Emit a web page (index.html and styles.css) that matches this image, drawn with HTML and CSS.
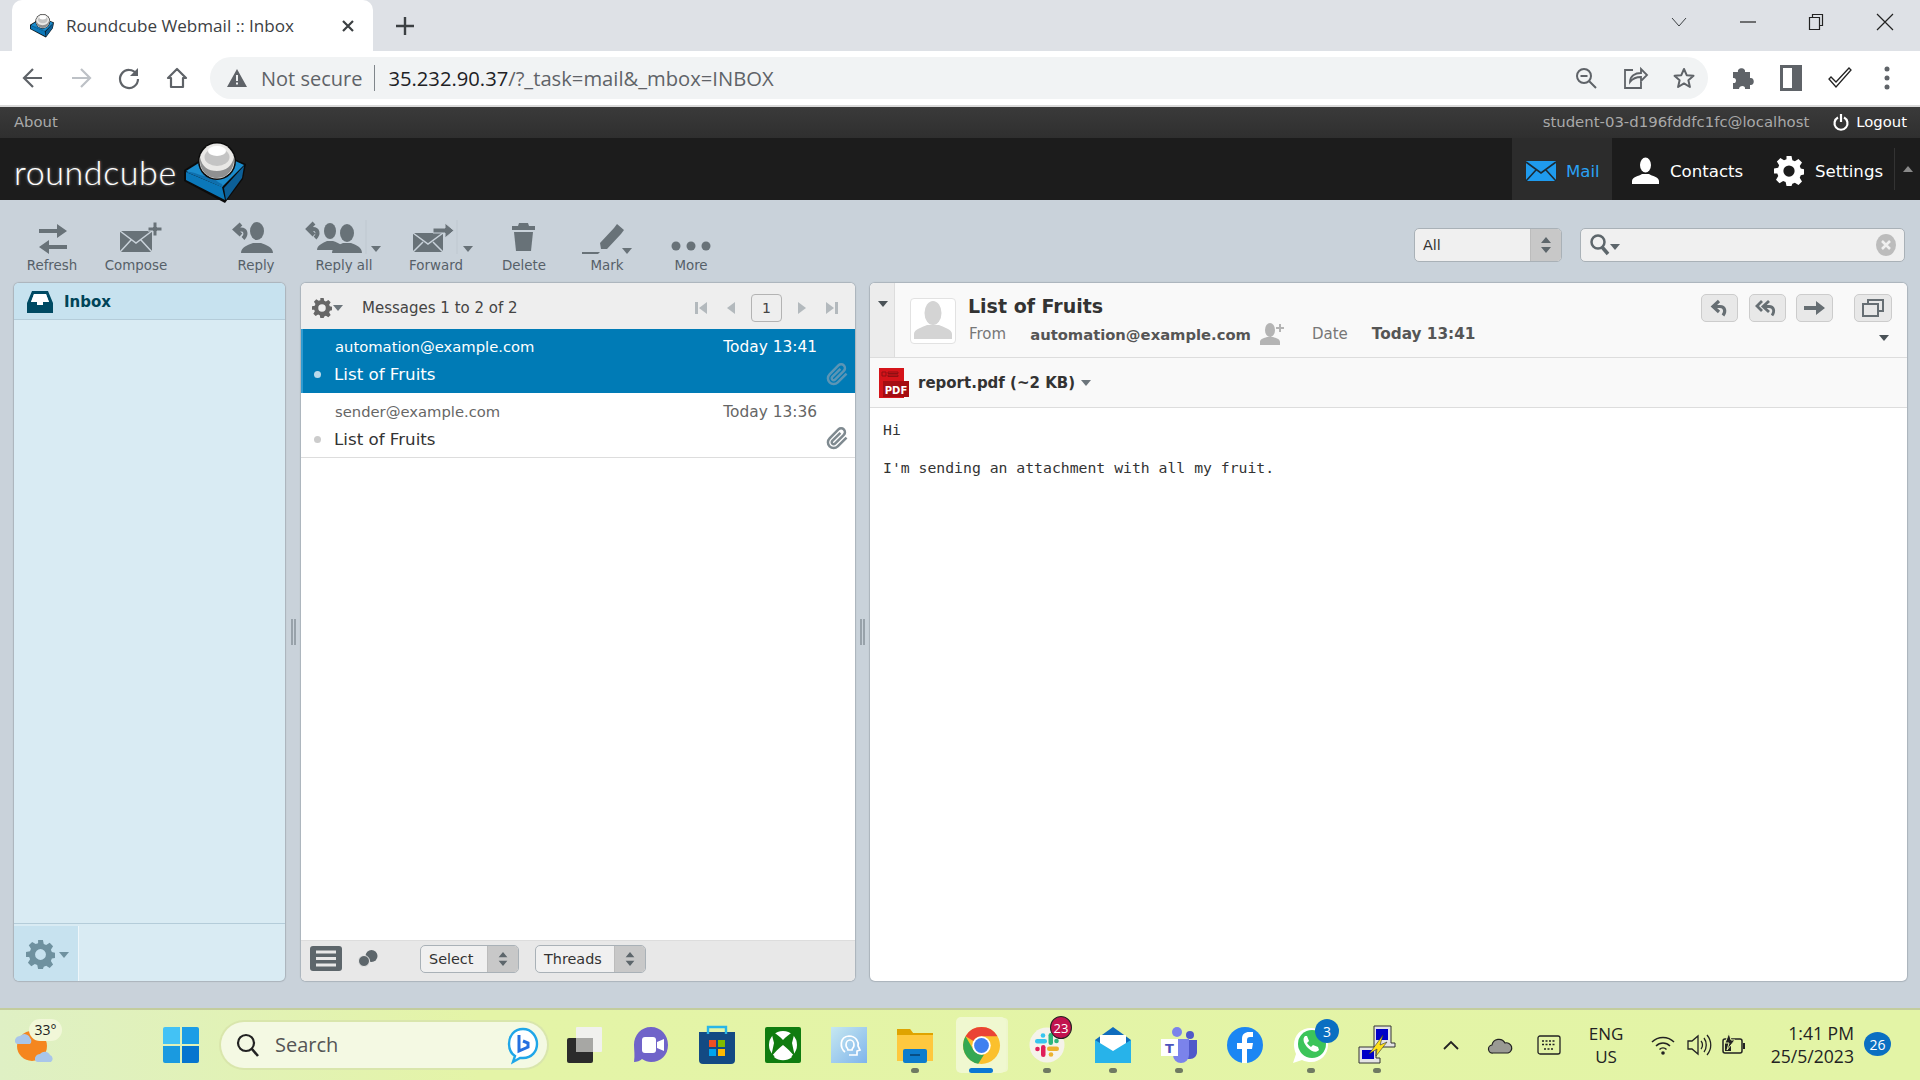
FILE: index.html
```html
<!DOCTYPE html>
<html lang="en">
<head>
<meta charset="utf-8">
<title>Roundcube Webmail :: Inbox</title>
<link rel="stylesheet" href="styles.css">
</head>
<body>
<svg class="defs" width="0" height="0">
  <defs>
    <symbol id="cube" viewBox="0 0 62 60" overflow="visible">
      <path d="M0 27 16 17 48 15 62 21 59 36 41 60 0 38z" fill="#0b0b0b"/>
      <path d="M2 29 38 44 41 57 2 37z" fill="#0b78ba"/>
      <path d="M2 28 18 18 47 16 60 22 38 44z" fill="#1b8ccd"/>
      <path d="M2 29c8-1 12 4 20 4s10 6 16 8l1 3z" fill="#0f6fad"/>
      <path d="M40 45 60 23 58 35 42 57z" fill="#0c5f97"/>
      <circle cx="33" cy="18" r="19" fill="#0b0b0b"/>
      <circle cx="33" cy="18" r="17.500" fill="#e9e8e6"/>
      <path d="M16 14c2 10 8 14 17 14s15-5 17-14c1 10-5 21-17 21s-18-10-17-21z" fill="#8f9091"/>
      <ellipse cx="33" cy="14" rx="12.500" ry="9" fill="#c4c4c4"/>
      <ellipse cx="33" cy="8" rx="9" ry="5" fill="#fff"/>
    </symbol>
    <symbol id="dbl" viewBox="0 0 16 20">
      <path d="M8 2 13 8H3zM8 18 3 12H13z" fill="#5d666b"/>
    </symbol>
    <symbol id="gear" viewBox="0 0 24 24">
      <path fill-rule="evenodd" d="M10 0h4l.7 3.3 2 .8L19.600 2.300l2.800 2.800-1.800 2.900.8 2 3.300.7v4l-3.300.7-.8 2 1.800 2.900-2.800 2.800-2.900-1.800-2 .8L14 24h-4l-.7-3.300-2-.8-2.900 1.800-2.800-2.800L3.400 16l-.8-2L0 14v-4l3.300-.7.800-2-1.800-2.900 2.800-2.800 2.900 1.800 2-.8zM12 7.500a4.500 4.500 0 1 0 0 9 4.500 4.500 0 0 0 0-9z"/>
    </symbol>
    <symbol id="clip" viewBox="0 0 24 24">
      <path d="M21.440 11.050l-9.190 9.190a6 6 0 0 1-8.490-8.490l9.190-9.190a4 4 0 0 1 5.660 5.660l-9.200 9.190a2 2 0 0 1-2.830-2.830l8.490-8.480" fill="none" stroke-width="2.600"/>
    </symbol>
  </defs>
</svg>

<div class="tabstrip">
  <div class="tab">
    <svg class="favicon" width="24" height="24" viewBox="0 0 62 60"><use href="#cube"/></svg>
    <span class="tab-title">Roundcube Webmail :: Inbox</span>
    <svg class="tab-x" width="14" height="14" viewBox="0 0 14 14"><path d="M2 2l10 10M12 2 2 12" stroke="#3c4043" stroke-width="2.200"/></svg>
  </div>
  <svg class="tab-new" width="20" height="20" viewBox="0 0 20 20"><path d="M10 1v18M1 10h18" stroke="#3c4043" stroke-width="2.400"/></svg>
  <div class="win-ctrls">
    <svg width="16" height="16" viewBox="0 0 16 16"><path d="M1 4l7 8 7-8" fill="none" stroke="#3c4043"/></svg>
    <svg width="16" height="16" viewBox="0 0 16 16"><path d="M0 8h16" stroke="#222" stroke-width="1.200"/></svg>
    <svg width="16" height="18" viewBox="0 0 16 18"><path d="M1.500 4.500h10v12h-10zM4.500 4V1.500h10v11H12" fill="none" stroke="#222" stroke-width="1.200"/></svg>
    <svg width="16" height="16" viewBox="0 0 16 16"><path d="M0 0l16 16M16 0 0 16" stroke="#222" stroke-width="1.200"/></svg>
  </div>
</div>

<div class="navbar">
  <div class="nav-btns">
    <svg width="22" height="22" viewBox="0 0 22 22"><path d="M20 11H3M11 2l-9 9 9 9" fill="none" stroke="#5f6368" stroke-width="2.200"/></svg>
    <svg width="22" height="22" viewBox="0 0 22 22"><path d="M2 11h17M11 2l9 9-9 9" fill="none" stroke="#bdc1c6" stroke-width="2.200"/></svg>
    <svg width="22" height="22" viewBox="0 0 22 22"><path d="M18.500 7A9 9 0 1 0 20 12" fill="none" stroke="#5f6368" stroke-width="2.200"/><path d="M20 1v8h-8z" fill="#5f6368"/></svg>
    <svg width="22" height="22" viewBox="0 0 22 22"><path d="M11 2 2 11h3v9h12v-9h3z" fill="none" stroke="#5f6368" stroke-width="2.200" stroke-linejoin="round"/></svg>
  </div>
  <div class="omnibox">
    <svg class="warn" width="20" height="18" viewBox="0 0 20 18"><path fill-rule="evenodd" d="M10 0 20 18H0zM9 6v6h2V6zM9 13.500v2h2v-2z" fill="#5f6368"/></svg>
    <span class="not-secure">Not secure</span>
    <span class="omni-sep"></span>
    <span class="url">35.232.90.37<span class="url-dim">/?_task=mail&amp;_mbox=INBOX</span></span>
    <span class="spring"></span>
    <svg width="22" height="22" viewBox="0 0 22 22"><circle cx="9" cy="9" r="7" fill="none" stroke="#5f6368" stroke-width="2"/><path d="M5.500 9h7M14 14l7 7" stroke="#5f6368" stroke-width="2"/></svg>
    <svg width="24" height="22" viewBox="0 0 24 22"><path d="M10 3H2v18h16v-6" fill="none" stroke="#5f6368" stroke-width="1.800"/><path d="M7 15c0-6 5-9 11-9V2l6 6-6 6v-4c-5 0-8 1-11 5z" fill="none" stroke="#5f6368" stroke-width="1.800"/></svg>
    <svg width="22" height="22" viewBox="0 0 22 22"><path d="M11 2l2.700 6.200 6.800.6-5.100 4.500 1.500 6.700L11 16.400 5.100 20l1.500-6.700L1.500 8.800l6.800-.6z" fill="none" stroke="#5f6368" stroke-width="2" stroke-linejoin="round"/></svg>
  </div>
  <div class="nav-ext">
    <svg width="22" height="24" viewBox="0 0 22 24"><path d="M1 6h5c-1-5 8-5 7 0h5v6c5-1 5 8 0 7v4h-5c1-4-6-4-6 0H1v-6c4 1 4-6 0-5z" fill="#5f6368"/></svg>
    <svg width="22" height="26" viewBox="0 0 22 26"><path fill-rule="evenodd" d="M0 0h22v26H0zM3 3v20h9V3z" fill="#5f6368"/></svg>
    <svg width="24" height="22" viewBox="0 0 24 22"><path d="M1 12l7 8L23 3l-2-2L8 15l-5-5z" fill="#fff" stroke="#222" stroke-width="1.300"/></svg>
    <svg width="6" height="24" viewBox="0 0 6 24"><circle cx="3" cy="3" r="2.500" fill="#5f6368"/><circle cx="3" cy="12" r="2.500" fill="#5f6368"/><circle cx="3" cy="21" r="2.500" fill="#5f6368"/></svg>
  </div>
</div>

<div class="topline">
  <span class="about">About</span>
  <span class="spring"></span>
  <span class="username">student-03-d196fddfc1fc@localhost</span>
  <svg class="power" width="16" height="18" viewBox="0 0 16 18"><path d="M5 4.500a6.500 6.500 0 1 0 6 0" fill="none" stroke="#fff" stroke-width="2.200"/><path d="M8 1v8" stroke="#fff" stroke-width="2.200"/></svg>
  <span class="logout">Logout</span>
</div>

<header class="appbar">
  <div class="logo">
    <span class="logo-text">roundcube</span>
    <svg class="logo-cube" width="62" height="60" viewBox="0 0 62 60"><use href="#cube"/></svg>
  </div>
  <span class="spring"></span>
  <nav class="tasks">
    <a class="task task-on">
      <svg width="30" height="20" viewBox="0 0 30 20"><path d="M0 0h30v20H0z" fill="#1f9bee"/><path d="M0 1l15 11L30 1M0 20l10-11M30 20 20 9" fill="none" stroke="#1c2a33" stroke-width="1.600"/></svg>
      <span>Mail</span>
    </a>
    <a class="task task-contacts">
      <svg width="27" height="26" viewBox="0 0 27 26"><ellipse cx="13.500" cy="7" rx="5.500" ry="7.500" fill="#fff"/><path d="M0 26v-3c0-4 7-5 10-7h7c3 2 10 3 10 7v3z" fill="#fff"/></svg>
      <span>Contacts</span>
    </a>
    <a class="task task-settings">
      <svg class="g-white" width="30" height="30"><use href="#gear"/></svg>
      <span>Settings</span>
    </a>
    <span class="minimize"><i class="tri-up"></i></span>
  </nav>
</header>

<main class="main">
  <div class="toolbar">
    <button class="tb b-refresh">
      <svg width="76" height="36" viewBox="0 0 76 36"><path d="M25 9h18V4l10 7-10 7v-5H25zM53 25H35v-5l-10 7 10 7v-5h18z"/></svg>
      <span>Refresh</span>
    </button>
    <button class="tb b-compose">
      <svg width="76" height="36" viewBox="0 0 76 36"><path d="M22 11h32v21H22z"/><path d="M22 11l16 12 16-12M22 32l11-12M54 32 43 20" fill="none" stroke="#c9d2da" stroke-width="1.500"/><path d="M50 7h5V2h4v5h5v4h-5v5h-4v-5h-5z" stroke="#c9d2da"/></svg>
      <span>Compose</span>
    </button>
    <button class="tb b-reply">
      <svg width="76" height="36" viewBox="0 0 76 36"><ellipse cx="39" cy="11" rx="7" ry="9"/><path d="M23 33c0-6 7-8 12-10h8c5 2 12 4 12 10z"/><path d="M23 4l-6 5.500 6 5.500M18 9.500h5c5 0 6 5 2 9" fill="none" stroke="#687278" stroke-width="4"/></svg>
      <span>Reply</span>
    </button>
    <button class="tb b-replyall">
      <svg width="76" height="36" viewBox="0 0 76 36"><ellipse cx="24" cy="11" rx="6" ry="8"/><path d="M11 30c0-5 6-7 10-9h6c3 1 6 2 8 4l-3 5z"/><ellipse cx="41" cy="13" rx="7" ry="9"/><path d="M26 33c0-6 7-8 11-10h8c5 2 11 4 11 10z"/><path d="M8 3 2 9l6 6M3 9h4c5 0 6 5 2 9" fill="none" stroke="#687278" stroke-width="4"/><path d="M60 0v34" stroke="#bfc8d0"/><path d="M65 26h10l-5 6z"/></svg>
      <span>Reply all</span>
    </button>
    <button class="tb b-forward">
      <svg width="76" height="36" viewBox="0 0 76 36"><path d="M15 13h30v19H15z"/><path d="M15 13l15 11 15-11M15 32l10-10M45 32 35 22" fill="none" stroke="#c9d2da" stroke-width="1.500"/><path d="M35 8h12V3l9 7.500-9 7.500v-5H35z" stroke="#c9d2da"/><path d="M59 0v34" stroke="#bfc8d0"/><path d="M65 26h10l-5 6z"/></svg>
      <span>Forward</span>
    </button>
    <button class="tb b-delete">
      <svg width="76" height="36" viewBox="0 0 76 36"><path d="M33 3h9l1 3h6v4H26V6h6z"/><path d="M28 12h19l-2 19H30z"/></svg>
      <span>Delete</span>
    </button>
    <button class="tb b-mark">
      <svg width="76" height="36" viewBox="0 0 76 36"><path d="M48 4l7 6-3 4-14 15h-6l-1-6 14-15z"/><path d="M13 32h18l-2 2H13z"/><path d="M53 28h10l-5 6z"/></svg>
      <span>Mark</span>
    </button>
    <button class="tb b-more">
      <svg width="76" height="36" viewBox="0 0 76 36"><circle cx="23" cy="26" r="4.500"/><circle cx="38" cy="26" r="4.500"/><circle cx="53" cy="26" r="4.500"/></svg>
      <span>More</span>
    </button>
    <span class="spring"></span>
    <div class="sel sel-filter">
      <span class="sel-label">All</span>
      <span class="sel-arrows"><svg width="16" height="20"><use href="#dbl"/></svg></span>
    </div>
    <div class="search">
      <svg width="32" height="24" viewBox="0 0 32 24"><circle cx="9" cy="9" r="6.500" fill="none" stroke="#5d666b" stroke-width="2.500"/><path d="M13 14l6 7" stroke="#5d666b" stroke-width="3.500"/><path d="M21 11h10l-5 6z" fill="#5d666b"/></svg>
      <span class="spring"></span>
      <svg width="20" height="24" viewBox="0 0 20 24"><ellipse cx="10" cy="12" rx="10" ry="11" fill="#bcbcbc"/><path d="M6 8l8 8M14 8l-8 8" stroke="#f0f0f0" stroke-width="2.500"/></svg>
    </div>
  </div>

  <div class="panels">
    <section class="panel p-folders">
      <div class="folder">
        <svg width="26" height="22" viewBox="0 0 26 22"><path fill-rule="evenodd" d="M5 0h16l5 12v10H0V12zM7 3 4 11h6v3h6v-3h6l-3-8z" fill="#004a63"/><path d="M7 3h12l3 8h-6v3h-6v-3H4z" fill="#fff"/></svg>
        <span>Inbox</span>
      </div>
      <div class="fill"></div>
      <div class="folder-foot">
        <span class="ff-gear">
          <svg class="g-blue" width="29" height="29"><use href="#gear"/></svg>
          <i class="tri tri-blue"></i>
        </span>
      </div>
    </section>

    <div class="splitter"><i></i></div>

    <section class="panel p-list">
      <div class="list-head">
        <svg class="g-grey" width="20" height="20"><use href="#gear"/></svg>
        <i class="tri tri-grey"></i>
        <span class="count">Messages 1 to 2 of 2</span>
        <span class="spring"></span>
        <svg width="14" height="14" viewBox="0 0 14 14" class="pg"><path d="M1 1h3v12H1zM13 1v12L5 7z"/></svg>
        <svg width="10" height="14" viewBox="0 0 10 14" class="pg pg-prev"><path d="M9 1v12L1 7z"/></svg>
        <span class="pagebox">1</span>
        <svg width="10" height="14" viewBox="0 0 10 14" class="pg pg-next"><path d="M1 1v12l8-6z"/></svg>
        <svg width="14" height="14" viewBox="0 0 14 14" class="pg pg-last"><path d="M1 1v12l8-6zM10 1h3v12h-3z"/></svg>
      </div>
      <div class="msg msg-on">
        <div class="msg-top"><span>automation@example.com</span><span class="msg-date">Today 13:41</span></div>
        <div class="msg-sub"><i class="dot"></i><span>List of Fruits</span></div>
        <svg class="clip" width="23" height="23"><use href="#clip"/></svg>
      </div>
      <div class="msg msg-2">
        <div class="msg-top"><span>sender@example.com</span><span class="msg-date">Today 13:36</span></div>
        <div class="msg-sub"><i class="dot"></i><span>List of Fruits</span></div>
        <svg class="clip" width="23" height="23"><use href="#clip"/></svg>
      </div>
      <div class="fill"></div>
      <div class="list-foot">
        <svg width="32" height="25" viewBox="0 0 32 25"><rect width="32" height="25" rx="3" fill="#5d666b"/><path d="M6 6h20M6 12.500h20M6 19h20" stroke="#e8e8e8" stroke-width="3"/></svg>
        <svg class="thr" width="20" height="18" viewBox="0 0 20 18"><circle cx="13.500" cy="6" r="6" fill="#5d666b"/><circle cx="6" cy="11" r="5.500" fill="#5d666b" stroke="#e8e8e8"/></svg>
        <div class="sel sel-select"><span class="sel-label">Select</span><span class="sel-arrows"><svg width="14" height="18"><use href="#dbl"/></svg></span></div>
        <div class="sel sel-threads"><span class="sel-label">Threads</span><span class="sel-arrows"><svg width="14" height="18"><use href="#dbl"/></svg></span></div>
      </div>
    </section>

    <div class="splitter sp2"><i></i></div>

    <section class="panel p-msg">
      <div class="msg-head">
        <div class="toggle"><i class="tri tri-dark"></i></div>
        <div class="avatar">
          <svg width="40" height="38" viewBox="0 0 40 38"><ellipse cx="20" cy="12" rx="8.500" ry="12" fill="#d4d4d4"/><path d="M1 38v-5c0-5 9-7 13-9h12c4 2 13 4 13 9v5z" fill="#d4d4d4"/></svg>
        </div>
        <div class="msg-info">
          <h1>List of Fruits</h1>
          <div class="meta">
            <span class="m-k m-from">From</span>
            <b class="m-v">automation@example.com</b>
            <svg class="addc" width="25" height="22" viewBox="0 0 25 22"><ellipse cx="10" cy="7" rx="5" ry="7" fill="#b4b4b4"/><path d="M0 22v-3c0-3 4-4 7-5h6c3 1 7 2 7 5v3z" fill="#b4b4b4"/><path d="M19 1h2v3h3v2h-3v3h-2V6h-3V4h3z" fill="#b4b4b4"/></svg>
            <span class="m-k m-date">Date</span>
            <b class="m-v m-when">Today 13:41</b>
          </div>
        </div>
        <div class="msg-tools">
          <div class="btns">
            <span class="ib"><svg width="20" height="18" viewBox="0 0 20 18"><path d="M9 2 3 7.500 9 13M4 7.500h6c5 0 6 5 3 9" fill="none" stroke="#666e73" stroke-width="3.200"/></svg></span>
            <span class="ib"><svg width="24" height="18" viewBox="0 0 24 18"><path d="M6 2 1 7l5 5M13 2 7 7.500 13 13M8 7.500h5c5 0 6 5 3 9" fill="none" stroke="#666e73" stroke-width="2.800"/></svg></span>
            <span class="ib"><svg width="22" height="16" viewBox="0 0 22 16"><path d="M0 6h12V1l9 7-9 7v-5H0z" fill="#666e73"/></svg></span>
            <span class="ib ib-open"><svg width="22" height="18" viewBox="0 0 22 18"><path d="M6 5V1h15v11h-5M1 5h15v12H1z" fill="none" stroke="#666e73" stroke-width="2"/></svg></span>
          </div>
          <i class="tri tri-dark tri-more"></i>
        </div>
      </div>
      <div class="attach">
        <svg width="32" height="32" viewBox="0 0 32 32"><path d="M1 1h25v30H1z" fill="#d5141a"/><path d="M4 5h4v4H4zM10 5h10v1.500H10zM10 8h10v1.500H10z" fill="none" stroke="#8f0f12"/><rect x="5" y="14" width="26" height="16" fill="#a50d12"/><text x="18" y="27" class="pdf-t" text-anchor="middle">PDF</text></svg>
        <span class="att-name">report.pdf (~2 KB)</span>
        <i class="tri tri-grey att-tri"></i>
      </div>
      <div class="body-text">
        <div>Hi</div>
        <div>&nbsp;</div>
        <div>I'm sending an attachment with all my fruit.</div>
      </div>
    </section>
  </div>
</main>

<footer class="taskbar">
  <div class="weather">
    <svg width="50" height="42" viewBox="0 0 50 42"><circle cx="19" cy="22" r="15" fill="#f5861f"/><path d="M2 18a5 5 0 0 1 5-6 6 6 0 0 1 10 2 4 4 0 0 1 0 6H5a3 3 0 0 1-3-2zM22 36a5 5 0 0 1 5-6 6 6 0 0 1 10 1 4 4 0 0 1 1 7H25a3 3 0 0 1-3-2z" fill="#a9c6ea"/></svg>
    <span class="temp">33°</span>
  </div>
  <div class="tk t-start">
    <svg width="36" height="36" viewBox="0 0 36 36"><path d="M0 2a2 2 0 0 1 2-2h15v17H0z" fill="#43c2f5"/><path d="M19 0h15a2 2 0 0 1 2 2v15H19z" fill="#1b9de6"/><path d="M0 19h17v17H2a2 2 0 0 1-2-2z" fill="#1a9ae0"/><path d="M19 19h17v15a2 2 0 0 1-2 2H19z" fill="#0675cf"/></svg>
  </div>
  <div class="tsearch">
    <svg width="24" height="24" viewBox="0 0 24 24"><circle cx="10" cy="10" r="8" fill="none" stroke="#222" stroke-width="2.200"/><path d="M15.500 15.500 22 23" stroke="#222" stroke-width="2.600"/></svg>
    <span>Search</span>
    <span class="spring"></span>
    <svg width="30" height="36" viewBox="0 0 30 36"><path d="M15 2C6 2 1 9 1 17c0 6 3 10 6 12l-2 6 7-4h3c9 0 14-7 14-14S24 2 15 2z" fill="#fff" stroke="#1fa6e8" stroke-width="2.400"/><path d="M11 8v16l9-4v-4l-5-2" fill="none" stroke="#2570e0" stroke-width="3"/></svg>
  </div>
  <div class="tk">
    <svg width="36" height="36" viewBox="0 0 36 36"><rect x="0" y="11" width="26" height="25" rx="2" fill="#2b2b2b"/><rect x="9" y="0" width="26" height="25" rx="1" fill="#f1f1ee"/><rect x="9" y="11" width="17" height="14" fill="#a7a7a4"/></svg>
  </div>
  <div class="tk">
    <svg width="36" height="38" viewBox="0 0 36 38"><path d="M18 1C8 1 1 9 1 19c0 5 1 10 0 17 3 0 6-1 8-3 3 2 6 3 9 3 10 0 17-7 17-17S28 1 18 1z" fill="#7063c9"/><rect x="9" y="11" width="14" height="16" rx="3" fill="#fff"/><path d="M24 16l7-3v12l-7-3z" fill="#fff"/></svg>
  </div>
  <div class="tk">
    <svg width="36" height="38" viewBox="0 0 36 38"><path d="M0 6h36v28a4 4 0 0 1-4 4H4a4 4 0 0 1-4-4z" fill="#134a83"/><path d="M9 8V1h18v7" fill="none" stroke="#29b6e8" stroke-width="2.400"/><path d="M10 14h7v7h-7z" fill="#ef4f23"/><path d="M19 14h7v7h-7z" fill="#7fba00"/><path d="M10 23h7v7h-7z" fill="#00a4ef"/><path d="M19 23h7v7h-7z" fill="#ffb900"/></svg>
  </div>
  <div class="tk">
    <svg width="36" height="36" viewBox="0 0 36 36"><rect width="36" height="36" rx="2" fill="#107c10"/><circle cx="18" cy="18" r="14" fill="#fff"/><path d="M6 4c5 2 9 6 12 9 3-3 7-7 12-9l-3 12 3 14c-4-5-8-9-12-12-4 3-8 7-12 12l3-14z" fill="#107c10"/><path d="M18 21c4 3 7 6 9 9a14 14 0 0 1-18 0c2-3 5-6 9-9z" fill="#fff"/></svg>
  </div>
  <div class="tk">
    <svg width="36" height="36" viewBox="0 0 36 36"><defs><linearGradient id="cg" x1="0" y1="0" x2="1" y2="1"><stop offset="0" stop-color="#c6e8f0"/><stop offset="1" stop-color="#7fb4ec"/></linearGradient></defs><rect width="36" height="36" fill="url(#cg)"/><path d="M14 25c-5-4-6-15 4-16 7 0 10 6 9 10l2 4-3 1v4h-8M15 18c0-3 2-5 4-5s4 2 4 5-2 3-2 5h-4c0-2-2-2-2-5z" fill="none" stroke="#fff" stroke-width="1.700"/></svg>
  </div>
  <div class="tk tk-on">
    <svg width="36" height="36" viewBox="0 0 36 36"><path d="M0 2h13l3 4h20v28H0z" fill="#fec83f"/><path d="M0 2h13l3 4h20v2H0z" fill="#dfa300"/><rect x="6" y="22" width="24" height="14" rx="2" fill="#0d7ccc"/><rect x="13" y="27" width="10" height="2" fill="#074e85"/></svg>
    <i class="run"></i>
  </div>
  <div class="tk tk-chrome">
    <span class="chrome-card">
      <svg width="37" height="37" viewBox="0 0 37 37"><circle cx="18.500" cy="18.500" r="18.500" fill="#fbc02d"/><path d="M18.500 0A18.500 18.500 0 0 1 34.500 9.250H18.500A9.250 9.250 0 0 0 10.500 13.900L2.500 9.250A18.500 18.500 0 0 1 18.500 0z" fill="#ea4335"/><path d="M2.500 9.250 10.500 23.100a9.250 9.250 0 0 0 10.600 4.300L15.300 36.700A18.500 18.500 0 0 1 2.500 9.250z" fill="#34a853"/><circle cx="18.500" cy="18.500" r="9.250" fill="#fff"/><circle cx="18.500" cy="18.500" r="7.400" fill="#3f80f0"/></svg>
    </span>
    <i class="run run-on"></i>
  </div>
  <div class="tk">
    <svg width="36" height="36" viewBox="0 0 36 36"><circle cx="18" cy="18" r="17.500" fill="#f5f3ea"/><rect x="6" y="12" width="12" height="4.500" rx="2.200" fill="#36c5f0"/><circle cx="14" cy="8.500" r="2.300" fill="#36c5f0"/><rect x="19.500" y="6" width="4.500" height="12" rx="2.200" fill="#2eb67d"/><circle cx="27.500" cy="14" r="2.300" fill="#2eb67d"/><rect x="18" y="19.500" width="12" height="4.500" rx="2.200" fill="#ecb22e"/><circle cx="22" cy="27.500" r="2.300" fill="#ecb22e"/><rect x="12" y="18" width="4.500" height="12" rx="2.200" fill="#e01e5a"/><circle cx="8.500" cy="22" r="2.300" fill="#e01e5a"/></svg>
    <b class="badge b-slack">23</b>
    <i class="run"></i>
  </div>
  <div class="tk">
    <svg width="36" height="36" viewBox="0 0 36 36"><path d="M18 0 36 13v23H0V13z" fill="#0f6cbd"/><path d="M5 8h26v12L18 26 5 20z" fill="#fff"/><path d="M0 13l18 11 18-11v23H0z" fill="#27b3ea"/></svg>
    <i class="run"></i>
  </div>
  <div class="tk">
    <svg width="36" height="36" viewBox="0 0 36 36"><circle cx="16" cy="5" r="5" fill="#7b83eb"/><circle cx="29" cy="8" r="4" fill="#5059c9"/><path d="M24 13h12v12c0 4-3 7-7 7h-5z" fill="#5059c9"/><path d="M10 12h18v16a8 8 0 0 1-16 0z" fill="#7b83eb"/><rect x="0" y="12" width="17" height="17" fill="#fff"/><text x="8.500" y="26" class="teams-t" text-anchor="middle">T</text></svg>
    <i class="run"></i>
  </div>
  <div class="tk">
    <svg width="36" height="36" viewBox="0 0 36 36"><circle cx="18" cy="18" r="18" fill="#1b86f3"/><path d="M15 36V22h-5v-6h5v-4c0-5 3-7 7-7h4v5h-3c-2 0-3 1-3 3v3h6l-1 6h-5v14z" fill="#fff"/></svg>
  </div>
  <div class="tk">
    <svg width="36" height="36" viewBox="0 0 36 36"><path d="M18 1C8 1 1 8 1 18c0 3 .8 6 2 9L0 36l9-3c3 1.500 6 2 9 2 10 0 17-8 17-17S28 1 18 1z" fill="#fff"/><circle cx="19" cy="17" r="14" fill="#3cc45a"/><path d="M12 9c-3 3-1 8 3 12s8 5 11 2l-1-3-5-2-2 2c-2-1-3-3-4-4l2-2-2-5z" fill="#fff"/></svg>
    <b class="badge b-wa">3</b>
    <i class="run"></i>
  </div>
  <div class="tk">
    <svg width="38" height="38" viewBox="0 0 38 38"><path d="M16 0h17v17h4v4H16z" fill="#e4e4e4" stroke="#333"/><path d="M18 3h12v11H18z" fill="#0000c8"/><path d="M1 21h17v11h4v5H1z" fill="#e4e4e4" stroke="#333"/><path d="M4 24h12v9H4z" fill="#0000c8"/><path d="M25 9 11 28l8-5-1 7 11-14-7 3z" fill="#ffe11a" stroke="#333" stroke-width=".6"/></svg>
    <i class="run"></i>
  </div>
  <div class="tray">
    <svg class="tr-caret" width="16" height="10" viewBox="0 0 16 10"><path d="M1 9l7-7 7 7" fill="none" stroke="#222" stroke-width="1.800"/></svg>
    <svg class="tr-cloud" width="24" height="18" viewBox="0 0 24 18"><path d="M5 17a4 4 0 0 1-1-8 7 7 0 0 1 13-2 5 5 0 0 1 3 10z" fill="#9a9a94" stroke="#222" stroke-width="1.200"/></svg>
    <svg class="tr-kb" width="24" height="20" viewBox="0 0 24 20"><rect x="1" y="1" width="22" height="18" rx="2" fill="none" stroke="#222" stroke-width="1.300"/><path d="M5 6h14M5 9.500h14M7 14h10" stroke="#222" stroke-width="1.500" stroke-dasharray="2 1.500"/></svg>
    <div class="lang"><span>ENG</span><span>US</span></div>
    <svg class="tr-wifi" width="24" height="20" viewBox="0 0 24 20"><path d="M1 7c6-6 16-6 22 0M5 11c4-4 10-4 14 0M8.500 14.500c2-2 5-2 7 0" fill="none" stroke="#222" stroke-width="1.500"/><circle cx="12" cy="18" r="1.800" fill="#222"/></svg>
    <svg class="tr-vol" width="24" height="22" viewBox="0 0 24 22"><path d="M1 7h4l6-5v18l-6-5H1z" fill="none" stroke="#222" stroke-width="1.300"/><path d="M14 7c2 2 2 6 0 8M17 4c3 4 3 10 0 14M20 1c5 6 5 14 0 20" fill="none" stroke="#222" stroke-width="1.300"/></svg>
    <svg class="tr-bat" width="24" height="24" viewBox="0 0 24 24"><rect x="1" y="6" width="19" height="14" rx="2" fill="none" stroke="#222" stroke-width="1.500"/><path d="M21 10h2v6h-2zM3 8h6v10H3z" fill="#222"/><path d="M7 0 3 10h4l-2 7 8-10H9z" fill="#222" stroke="#e4f4a6"/></svg>
    <div class="clock"><span>1:41 PM</span><span>25/5/2023</span></div>
    <span class="notif">26</span>
  </div>
</footer>
</body>
</html>
```

FILE: styles.css
```css
* { box-sizing: border-box; }
html, body { margin: 0; padding: 0; }
body {
  width: 1920px; height: 1080px; overflow: hidden;
  display: flex; flex-direction: column;
  font-family: "DejaVu Sans", sans-serif;
  background: #c9d2da;
}
svg { display: block; flex: none; overflow: visible; }
i { display: block; font-style: normal; }
.defs { position: absolute; }
.spring { flex: 1; }
.fill { flex: 1; }

/* browser chrome */
.tabstrip { height: 51px; background: #dee1e6; display: flex; align-items: center; padding-left: 12px; flex: none; }
.tab {
  width: 361px; height: 51px; background: #fff; margin-top: 0;
  border-radius: 10px 10px 0 0; display: flex; align-items: center; padding: 0 0 0 18px;
  font-family: "Open Sans", sans-serif; font-size: 17.100px; color: #3c4043;
}
.tab-title { margin-left: 12px; width: 275px; white-space: nowrap; }
.tab-new { margin-left: 22px; }
.win-ctrls { margin-left: auto; width: 222px; margin-right: 27px; display: flex; justify-content: space-between; align-items: center; margin-top: -7px; }

.navbar { height: 54px; background: #fff; display: flex; align-items: center; flex: none; padding-left: 22px; }
.nav-btns { display: flex; gap: 26px; width: 176px; align-items: center; }
.omnibox {
  width: 1498px; height: 42px; margin-left: 12px; background: #f1f3f4; border-radius: 21px;
  display: flex; align-items: center; padding: 0 13px 0 17px; gap: 26px;
  font-family: "Open Sans", sans-serif; font-size: 20px; color: #202124;
}
.warn { margin-right: -2px; }
.not-secure { color: #5f6368; margin-left: -10px; white-space: nowrap; }
.omni-sep { width: 1px; height: 26px; background: #80868b; margin: 0 -13px 0 -14px; }
.url { white-space: nowrap; font-size: 20.200px; }
.url-dim { color: #5f6368; }
.nav-ext { display: flex; align-items: center; gap: 26px; margin-left: 24px; }
.nav-ext svg:last-child { margin-left: 6px; }

/* roundcube header */
.topline {
  height: 33px; flex: none; background: linear-gradient(#dadada 0 2px, #3a3a3a 2px, #2f2f2f);
  display: flex; align-items: center; padding: 0 13px 0 14px;
  font-size: 14.800px; color: #a9a9a9;
}
.username { margin-right: 24px; font-size: 14.900px; }
.logout { color: #fff; margin-left: 7px; }
.about { color: #aaa; }

.appbar { height: 62px; flex: none; background: #1c1c1c; display: flex; align-items: stretch; position: relative; }
.logo { display: flex; align-items: flex-start; padding-left: 14px; }
.logo-text { font-family: Lato, sans-serif; font-size: 34px; font-weight: 300; color: #fff; text-shadow: 0 0 3px #999; letter-spacing: .6px; margin-top: 14px; line-height: 40px; }
.logo-cube { margin: 5px 0 0 7px; position: relative; }
.tasks { display: flex; align-items: stretch; font-size: 16.600px; color: #fff; }
.task { display: flex; align-items: center; padding: 4px 14px 0; gap: 10px; white-space: nowrap; }
.task-on { width: 100px; background: #2c2c2c; color: #2aa2f5; }
.task-contacts { padding: 4px 18px 0 20px; width: 148px; gap: 11px; }
.task-settings { padding: 4px 12px 0 14px; width: 134px; gap: 11px; }
.minimize { width: 26px; border-left: 1px solid #333; display: flex; align-items: center; justify-content: center; margin: 10px 0; }
.tri-up { width: 0; height: 0; border: 5px solid transparent; border-bottom: 6px solid #8a8a8a; border-top: 0; }
.g-white { fill: #fff; }

/* toolbar */
.main { flex: 1; display: flex; flex-direction: column; min-height: 0; }
.toolbar { height: 83px; flex: none; display: flex; align-items: flex-start; padding: 20px 15px 0 14px; }
.tb {
  width: 76px; padding: 0; border: 0; background: none; display: flex; flex-direction: column; align-items: center;
  font-family: inherit; font-size: 13.400px; color: #566068; fill: #687278;
}
.tb span { height: 18px; line-height: 18px; margin-top: 1px; white-space: nowrap; }
.b-compose { margin-left: 8px; }
.b-reply { margin-left: 44px; }
.b-replyall { margin-left: 12px; }
.b-forward { margin-left: 16px; }
.b-delete { margin-left: 12px; }
.b-mark { margin-left: 7px; }
.b-more { margin-left: 8px; }

.sel {
  height: 28px; background: #f0f0f0; border: 1px solid #a9b1b7; border-radius: 5px; display: flex; align-items: stretch; overflow: hidden;
  font-size: 14.400px; color: #333;
}
.sel-label { flex: 1; display: flex; align-items: center; padding-left: 8px; }
.sel-arrows { background: #c8c8c8; display: flex; align-items: center; justify-content: center; border-left: 1px solid #bcbcbc; }
.sel-filter { width: 148px; height: 34px; margin-top: 8px; }
.sel-filter .sel-arrows { width: 31px; }
.search {
  width: 325px; height: 34px; margin: 8px 0 0 18px; background: #f0f0f0; border: 1px solid #a9b1b7; border-radius: 5px;
  display: flex; align-items: center; padding: 0 8px 0 8px;
}

/* panels */
.panels { height: 698px; flex: none; display: flex; padding: 0 13px 0 14px; }
.panel { border-radius: 5px; overflow: hidden; display: flex; flex-direction: column; box-shadow: 0 0 1px 1px #aab3bb; }
.splitter { display: flex; align-items: center; justify-content: center; width: 16px; }
.splitter i { width: 5px; height: 26px; border-left: 2px solid #98a2aa; border-right: 2px solid #98a2aa; }
.sp2 { width: 15px; }

.p-folders { width: 271px; background: #d9ebf3; }
.folder { height: 37px; background: #c7e2ef; border-bottom: 1px solid #b4ccd9; display: flex; align-items: center; padding: 1px 0 0 13px; font-weight: bold; font-size: 15px; color: #004458; }
.folder span { margin-left: 11px; }
.folder-foot { height: 58px; border-top: 1px solid #b4ccd9; }
.ff-gear { width: 65px; height: 100%; margin-top: 2px; background: #c7e2ef; border-right: 1px solid #eef6fa; display: flex; align-items: center; padding-left: 12px; }
.g-blue { fill: #6f919f; }
.tri { width: 0; height: 0; border-left: 5px solid transparent; border-right: 5px solid transparent; border-top: 6px solid #6f919f; }
.tri-blue { margin-left: 4px; }
.tri-grey { border-top-color: #6c757b; }
.tri-dark { border-top-color: #4a5257; }

.p-list { width: 554px; background: #fff; }
.list-head { height: 46px; flex: none; background: #eee; display: flex; align-items: center; padding: 3px 16px 0 11px; font-size: 15px; color: #444; fill: #b3b9bd; }
.g-grey { fill: #666; }
.list-head .tri-grey { margin-left: 1px; }
.count { margin-left: 19px; white-space: nowrap; }
.pagebox { width: 31px; height: 28px; margin: 0 15px 0 15px; border: 1px solid #b3b3b3; border-radius: 4px; display: flex; align-items: center; justify-content: center; font-size: 14px; }
.pg-prev { margin-left: 18px; }
.pg-last { margin-left: 18px; }
.msg { height: 64px; flex: none; padding: 9px 38px 0 34px; border-bottom: 1px solid #ddd; position: relative; color: #666; font-size: 14.770px; stroke: #7f8a90; }
.msg-top { display: flex; justify-content: space-between; height: 17px; line-height: 17px; }
.msg-date { font-size: 15.400px; margin-top: 1px; }
.msg-sub { display: flex; align-items: center; margin: 10px 0 0 -21px; color: #333; font-size: 16.700px; height: 18px; }
.dot { width: 7px; height: 7px; border-radius: 50%; background: #ccc; margin-right: 13px; }
.clip { position: absolute; right: 6px; bottom: 7px; }
.msg-on { height: 65px; background: #007bb6; color: #fff; border-bottom: 1px solid #fff; box-shadow: inset 2px 0 0 #2f9bd1; stroke: #5b95b5; }
.msg-on .msg-sub { color: #fff; }
.msg-on .dot { background: #b9d9ea; }
.list-foot { height: 41px; flex: none; background: #e8e8e8; border-top: 1px solid #ddd; display: flex; align-items: center; padding: 0 0 5px 9px; font-size: 14px; }
.thr { margin-left: 16px; }
.sel-select { width: 99px; margin-left: 42px; }
.sel-select .sel-arrows { width: 31px; }
.sel-threads { width: 111px; margin-left: 16px; }
.sel-threads .sel-arrows { width: 31px; }

.p-msg { width: 1037px; background: #fff; }
.msg-head { height: 75px; flex: none; background: #f9f9f9; border-bottom: 1px solid #ddd; display: flex; }
.toggle { width: 25px; background: #ececec; border-right: 1px solid #ddd; padding: 18px 0 0 8px; }
.avatar { width: 46px; height: 46px; margin: 15px 0 0 15px; background: #fff; border: 1px solid #e2e2e2; border-radius: 4px; display: flex; align-items: flex-end; justify-content: center; padding-bottom: 4px; }
.msg-info { flex: 1; padding: 11px 0 0 12px; }
.msg-info h1 { margin: 0; font-size: 19px; line-height: 24px; font-weight: bold; color: #333; }
.meta { display: flex; align-items: center; margin-top: 5px; height: 22px; font-size: 14.750px; color: #666; white-space: nowrap; }
.m-k { font-weight: normal; color: #777; font-size: 15px; }
.m-from { margin-left: 1px; }
.m-v { color: #555; margin-left: 24px; }
.m-when { font-size: 15.300px; }
.addc { margin-left: 9px; }
.m-date { margin-left: 27px; }
.msg-tools { width: 206px; padding: 11px 14px 0 0; position: relative; }
.btns { display: flex; gap: 10px; }
.ib { width: 37px; height: 28px; background: #e8e8e8; border: 1px solid #ccc; border-radius: 5px; display: flex; align-items: center; justify-content: center; }
.ib:nth-child(2) { margin-left: 1px; }
.ib-open { margin-left: 11px; width: 38px; }
.tri-more { position: absolute; right: 18px; top: 52px; }
.attach { height: 50px; flex: none; background: #f9f9f9; border-bottom: 1px solid #ddd; display: flex; align-items: center; padding-left: 8px; font-weight: bold; font-size: 15px; color: #333; }
.att-name { margin-left: 8px; }
.att-tri { margin-left: 6px; }
.pdf-t { font: bold 10px "DejaVu Sans", sans-serif; fill: #fff; }
.teams-t { font: bold 13px "DejaVu Sans", sans-serif; fill: #4b53bc; }
.body-text { flex: 1; padding: 12px 13px; font-family: "DejaVu Sans Mono", monospace; font-size: 14.780px; line-height: 19px; color: #333; }

/* taskbar */
.taskbar {
  height: 72px; flex: none; margin-top: 27px; border-top: 2px solid #c3cd9d;
  background: linear-gradient(90deg, #dff0c4, #e4f4a7 25%, #e3f4a6);
  display: flex; align-items: center; position: relative;
}
.weather { width: 163px; padding-left: 13px; position: relative; align-self: stretch; display: flex; align-items: center; }
.temp { position: absolute; left: 29px; top: 9px; width: 33px; height: 22px; border-radius: 11px; background: #f1f7d8; font-family: "Open Sans", sans-serif; font-size: 14px; text-align: center; line-height: 22px; color: #222; }
.tk { width: 66px; height: 70px; position: relative; display: flex; align-items: center; justify-content: center; }
.t-start { width: 36px; }
.tsearch {
  width: 326px; height: 46px; margin: -1px 5px 0 22px; border-radius: 23px;
  background: #f4f9e3; box-shadow: 0 0 0 2px #d9e6ac;
  display: flex; align-items: center; padding: 0 9px 0 15px;
  font-family: "Open Sans", sans-serif; font-size: 20px; color: #555;
}
.tsearch span:first-of-type { margin-left: 15px; }
.run { position: absolute; bottom: 7px; left: 50%; margin-left: -4px; width: 8px; height: 5px; border-radius: 3px; background: #6f7a62; }
.run-on { width: 24px; margin-left: -12px; background: #0a78d4; }
.tk-chrome { z-index: 1; }
.chrome-card { width: 50px; height: 56px; border-radius: 5px; background: #f0f8d0; box-shadow: 3px 0 0 -1px #eef6cc; display: flex; align-items: center; justify-content: center; }
.badge { position: absolute; display: flex; align-items: center; justify-content: center; border-radius: 50%; font-family: "Open Sans", sans-serif; font-weight: normal; color: #fff; }
.b-slack { left: 36px; top: 6px; width: 22px; height: 23px; background: #c2134f; border: 1px solid #222; font-size: 13px; }
.b-wa { left: 37px; top: 9px; width: 24px; height: 24px; background: #0a6fc2; font-size: 14px; }
.tray { flex: 1; display: flex; align-items: center; font-family: "Open Sans", sans-serif; font-size: 17px; color: #222; padding-left: 33px; }
.tr-cloud { margin-left: 29px; }
.tr-kb { margin-left: 25px; }
.lang { width: 60px; margin-left: 15px; display: flex; flex-direction: column; align-items: center; line-height: 23px; }
.tr-wifi { margin-left: 15px; }
.tr-vol { margin-left: 12px; }
.tr-bat { margin-left: 11px; }
.clock { width: 108px; display: flex; flex-direction: column; align-items: flex-end; line-height: 23px; font-size: 17.600px; white-space: nowrap; }
.notif { margin: -2px 0 0 10px; width: 27px; height: 24px; border-radius: 50%; background: #0a6fc2; color: #fff; font-size: 14px; display: flex; align-items: center; justify-content: center; }
```
